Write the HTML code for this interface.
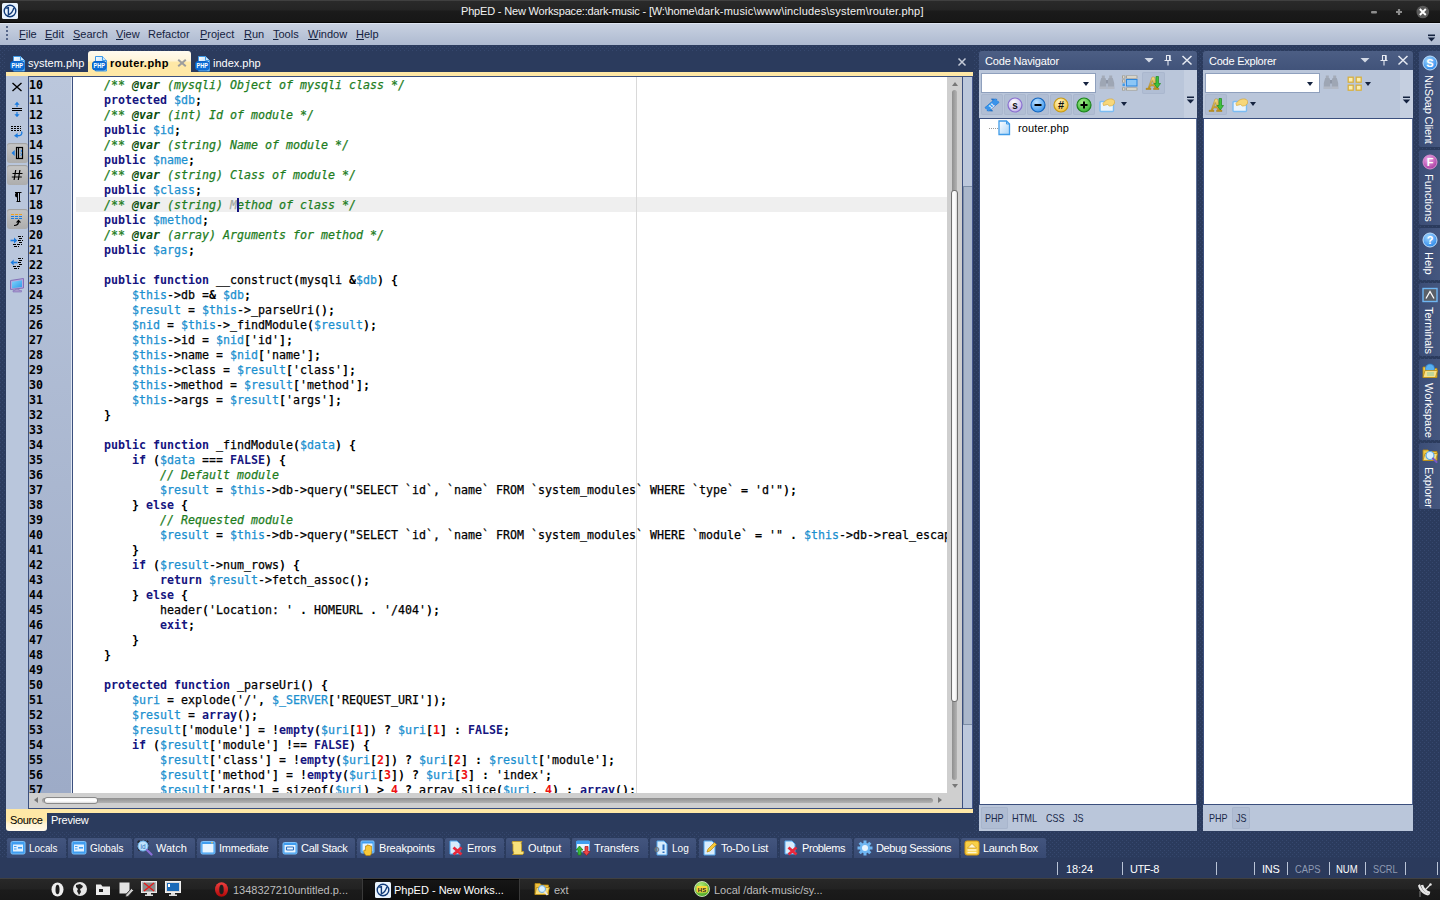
<!DOCTYPE html>
<html lang="en"><head><meta charset="utf-8"><title>PhpED - New Workspace::dark-music</title>
<style>
*{box-sizing:border-box}
html,body{margin:0;padding:0;width:1440px;height:900px;overflow:hidden;background:#2b3b5d;font-family:"Liberation Sans",sans-serif;font-size:11px;color:#000}
.abs,.abs>*{position:absolute}
#root{position:absolute;left:0;top:0;width:1440px;height:900px;overflow:hidden}
#root div,#root span.p,#root svg{position:absolute}
#dots{left:0;top:45px;width:1440px;height:833px}
/* title bar */
#title{left:0;top:0;width:1440px;height:23px;background:linear-gradient(#404040 0,#404040 1px,#2a2a2a 1px,#242424 10px,#1b1b1b 11px,#171717 22px,#050505 22px)}
#title .t{left:461px;top:4px;color:#f2f2f2;font-size:11px;line-height:14px;white-space:pre}
/* menu */
#menu{left:0;top:23px;width:1440px;height:22px;background:linear-gradient(#dde4f0 0,#dde4f0 1px,#c8d1e1 1px,#aebad0)}
#menu .m{top:4px;font-size:11px;line-height:14px;color:#14223f;white-space:pre}
#menu u{text-decoration:underline}
/* editor */
#tabrow{left:0;top:51px;width:974px;height:21px}
#tabbg{left:6px;top:51px;width:968px;height:21px;background:#2b3b5d}
.etab{top:0;height:21px;color:#fff;font-size:11px;line-height:14px;white-space:pre}
.etab .tx{top:5px}
#ed-yt{left:6px;top:72px;width:967px;height:4px;background:#ffe8a6}
#ed-yb{left:6px;top:809px;width:967px;height:4px;background:#ffe8a6}
#ed-strip{left:6px;top:76px;width:22px;height:733px;background:#b9c6dc}
#ed-frame{left:28px;top:76px;width:935px;height:733px;background:#3b4f7d}
#gutter{left:29px;top:77px;width:43px;height:716px;background:linear-gradient(#bbc7dc,#9dabc7);overflow:hidden;border-right:1px solid #dfe6f1}
#gutter .nums{left:0;top:1px;font:bold 11.63px/15px "DejaVu Sans Mono","Liberation Mono",monospace;color:#000}
#gutter .nums div{position:static}
#code{left:73px;top:77px;width:874px;height:716px;background:#fff;overflow:hidden}
#code .margin{left:563px;top:0;width:1px;height:716px;background:#d9d9d9}
#code .lines{left:3px;top:1px;width:2000px;font:11.63px/15px "DejaVu Sans Mono","Liberation Mono",monospace;color:#000}
#code .lines div{position:static;height:15px;white-space:pre;-webkit-text-stroke:0.25px}
#code .lines b{-webkit-text-stroke:0}
#code .lines .cur{background:none}
#curbg{left:3px;top:120px;width:871px;height:15px;background:#efefef}
#code .c{color:#1e7d1e;font-style:italic}
#code .cv{color:#0b4d0b}
#code .k{color:#15157f}
#code .v{color:#1b90cf}
#code .n{color:#ee1111}
#vscroll{left:947px;top:77px;width:15px;height:716px;background:#cfcfcf}
#hscroll{left:29px;top:793px;width:918px;height:15px;background:#cfcfcf}
#corner{left:947px;top:793px;width:15px;height:15px;background:#cfcfcf}
#ed-right{left:962px;top:76px;width:11px;height:733px;background:#bcc8dc;border-left:1px solid #3b4f7d;border-right:1px solid #44568a;border-top:1px solid #3b4f7d;border-bottom:1px solid #3b4f7d}

/* window buttons */
#title .logo{left:2px;top:3px;width:16px;height:16px}
#title .wb{left:1366px;top:3px;width:70px;height:18px}
#menu .grip{left:6px;width:2px;height:2px;background:#56678a}
#menu .chev{left:1427px;top:11px;width:9px;height:9px}
/* editor tabs */
.etab.act{background:linear-gradient(#fffbf0 0,#fff5da 45%,#ffe8a6 55%,#ffe8a6);border-radius:3px 3px 0 0;color:#000}
.etab .ic{top:5px;width:16px;height:16px}
.etab .x{top:4px;font:bold 12px/14px "Liberation Sans",sans-serif;color:#9b9b9b}
#edclose{left:957px;top:6px;width:10px;height:10px}
/* strip buttons */
.sb{left:1px;width:21px;height:20px}
.sb.on{background:linear-gradient(#c6c6c6,#adadad);border-radius:3px;box-shadow:inset 0 1px 1px #9e9e9e}
.sb svg{left:2px;top:2px;width:16px;height:16px}
/* scrollbars */
#vscroll .trk{left:5px;top:13px;width:5px;height:690px;border-radius:3px;background:linear-gradient(90deg,#8e8e8e,#b3b3b3)}
#vscroll .thumb{left:4px;top:113px;width:7px;height:512px;border-radius:3px;background:linear-gradient(90deg,#f4f4f4,#fff 40%,#f4f4f4 70%,#d4d4d4);border:1px solid #707070}
#hscroll .trk{left:13px;top:5px;width:891px;height:5px;border-radius:3px;background:linear-gradient(#8e8e8e,#b3b3b3)}
#hscroll .thumb{left:15px;top:4px;width:54px;height:7px;border-radius:3px;background:linear-gradient(#f4f4f4,#fff 40%,#fff 60%,#dcdcdc);border:1px solid #8a8a8a}
.arr{width:0;height:0;border:3px solid transparent}
#ed-right .dk{left:0;top:109px;width:9px;height:539px;background:#aab7cb;border:1px solid #7d8ea6;border-right:0}
#caret{left:164px;top:121px;width:2px;height:14px;background:#15157f}

/* side panels */
.pn{top:51px;height:780px}
.pn .hd{left:0;top:0;right:0;height:19px;border-radius:3px 3px 0 0;background:linear-gradient(#4c5e84,#41537a);color:#fff;font-size:11px;line-height:14px}
.pn .hd .tt{left:6px;top:3px;white-space:pre}
.pn .hd svg{top:3px;width:12px;height:12px}
.pn .tb{left:0;top:19px;right:0;height:48px;background:#c5cfe0}
.pn .tb .in{left:0;top:0;right:13px;bottom:0;background:#bac6da}
.pn .combo{left:2px;top:3px;width:115px;height:20px;background:#fff;border:1px solid #8fa0bd}
.pn .combo i{position:absolute;right:6px;top:8px;width:0;height:0;border:3.5px solid transparent;border-top:4px solid #14223f;border-bottom:0}
.pn .btn{width:22px;height:21px;background:#b1bed4;border-radius:2px;box-shadow:inset 0 0 0 1px #aab7ce}
.pn .btn svg,.pn svg.ti{width:16px;height:16px}
.pn .btn svg{left:3px;top:3px}
.pn .dd{width:0;height:0;border:3px solid transparent;border-top:4px solid #14223f;border-bottom:0}
.pn .tree{left:0;top:67px;right:0;height:687px;background:#fff;border:1px solid #3b4f7d;border-right-color:#5a6d95}
.pn .ft{left:0;top:754px;right:0;height:26px;background:#bac6da}
.pn .ft .b{top:2px;height:22px;font-size:11px;line-height:14px;color:#1b2a4a;padding:4px 0 0 0;text-align:center;white-space:pre}
.pn .ft .tx{top:6px;font-size:11px;line-height:14px;color:#1b2a4a;white-space:pre}
.pn .ft .b.on{background:#b0bdd3;border-radius:2px;box-shadow:inset 0 0 0 1px #a8b5cc}

/* source/preview */
#srcrow{left:6px;top:813px;width:968px;height:19px;background:#2b3b5d}
#srcrow .s{left:0;top:0;width:41px;height:18px;background:linear-gradient(#ffe8a6 0,#ffe8a6 40%,#fff3d2 60%,#fff9ea);border-radius:0 0 3px 3px;color:#000}
#srcrow .tx{top:0px;font-size:11px;line-height:14px;white-space:pre}
/* bottom tabs */
.bt{top:838px;height:20px;background:linear-gradient(#43557e,#374972);border-radius:2px 2px 0 0;color:#fff;font-size:11px;line-height:14px}
.bt svg{left:3px;top:2px;width:16px;height:16px}
.bt .tx{left:22px;top:3px;white-space:pre}
#status{left:0;top:858px;width:1440px;height:20px;background:#2b3a5c}
#status .sep{top:4px;width:1px;height:13px;background:#b9c3d6}
#status .tx{top:4px;font-size:11px;line-height:14px;color:#fff;white-space:pre}
#status .dim{color:#8f9bb3}
/* sidebar */
.st{left:1419px;width:21px;background:linear-gradient(90deg,#3b4d76,#45577f);border-radius:2px 0 0 2px;color:#fff}
.st svg{left:3px;top:4px;width:16px;height:16px}
.st .tx{left:17px;top:24px;font-size:11px;line-height:14px;white-space:pre;transform-origin:0 0;transform:rotate(90deg)}
/* taskbar */
#task{left:0;top:878px;width:1440px;height:22px;background:linear-gradient(#404040 0,#404040 1px,#282828 1px,#222 11px,#1b1b1b 12px,#181818);color:#bdbdbd;font-size:11px;line-height:14px}
#task .tx{top:5px;white-space:pre}
#task svg{top:3px;width:16px;height:16px}
#task .act{left:362px;top:1px;width:158px;height:21px;background:linear-gradient(#161616,#0c0c0c);box-shadow:inset 1px 0 0 #3a3a3a,inset -1px 0 0 #3a3a3a,inset 0 1px 0 #050505}
</style></head><body><div id="root">
<svg id="dots" width="1440" height="833"><defs><pattern id="dp" width="4" height="4" patternUnits="userSpaceOnUse"><rect x="0" y="1" width="1" height="1" fill="#36486e"/><rect x="2" y="3" width="1" height="1" fill="#36486e"/></pattern></defs><rect width="1440" height="833" fill="url(#dp)"/></svg>

<div id="title"><svg class="logo" viewBox="0 0 16 16"><rect x="0" y="0" width="16" height="16" rx="1.5" fill="#e9f3fd"/><circle cx="8" cy="8" r="5.8" fill="none" stroke="#103a78" stroke-width="1.4"/><path d="M4.2 5.3l2.2-.6v7.2c2.6-1.2 4.6-3.6 5.4-7" fill="none" stroke="#103a78" stroke-width="1.4"/></svg><div class="t"><span style="letter-spacing:-0.174px">PhpED - New Workspace::dark-music - [W:\home</span><span style="letter-spacing:0.2px">\dark-music\www\includes\system\router.php]</span></div><svg class="wb" viewBox="0 0 70 18"><rect x="5" y="8" width="6" height="2.4" rx="1" fill="#8c8c8c"/><path d="M33 6v6M30 9h6" stroke="#8c8c8c" stroke-width="2.2"/><circle cx="56.8" cy="9" r="6.3" fill="#5a5a5a"/><path d="M53.8 6l6 6M59.8 6l-6 6" stroke="#fff" stroke-width="1.9"/></svg></div>
<div id="menu"><div class="grip" style="top:3px"></div><div class="grip" style="top:7px"></div><div class="grip" style="top:11px"></div><div class="grip" style="top:15px"></div><svg class="chev" viewBox="0 0 9 9"><rect x="1" y="0.5" width="7" height="1.6" fill="#14223f"/><path d="M0.8 3.5h7.4L4.5 7.6z" fill="#14223f"/></svg>
<div class="m" style="left:19px"><u>F</u>ile</div>
<div class="m" style="left:45px"><u>E</u>dit</div>
<div class="m" style="left:73px"><u>S</u>earch</div>
<div class="m" style="left:116px"><u>V</u>iew</div>
<div class="m" style="left:148px">Refactor</div>
<div class="m" style="left:200px"><u>P</u>roject</div>
<div class="m" style="left:244px"><u>R</u>un</div>
<div class="m" style="left:273px"><u>T</u>ools</div>
<div class="m" style="left:308px"><u>W</u>indow</div>
<div class="m" style="left:356px"><u>H</u>elp</div>
</div>

<div id="tabbg"></div>
<div id="tabrow">
<div class="etab" style="left:6px;width:82px"><svg class="ic" style="left:4px" viewBox="0 0 16 16"><defs><linearGradient id="pg1" x1="0" y1="0" x2="1" y2="1"><stop offset="0" stop-color="#ffffff"/><stop offset="1" stop-color="#8cc8f6"/></linearGradient></defs><path d="M3.500 0.500h7l4 4v10.500h-11z" fill="url(#pg1)" stroke="#3f9be8"/><path d="M10.500 0.500v4h4" fill="#cfe8fb" stroke="#3f9be8"/><rect x="0.500" y="5.500" width="13.500" height="8.500" rx="2.500" fill="#0b6fd8" stroke="#0a62c6"/><text x="7.250" y="12.300" font-family="Liberation Sans, sans-serif" font-weight="bold" font-size="6.800" fill="#fff" text-anchor="middle" textLength="11.500" lengthAdjust="spacingAndGlyphs">PHP</text></svg><div class="tx" style="left:22px">system.php</div></div>
<div class="etab act" style="left:88px;width:103px"><svg class="ic" style="left:4px" viewBox="0 0 16 16"><defs><linearGradient id="pg2" x1="0" y1="0" x2="1" y2="1"><stop offset="0" stop-color="#ffffff"/><stop offset="1" stop-color="#8cc8f6"/></linearGradient></defs><path d="M3.500 0.500h7l4 4v10.500h-11z" fill="url(#pg2)" stroke="#3f9be8"/><path d="M10.500 0.500v4h4" fill="#cfe8fb" stroke="#3f9be8"/><rect x="0.500" y="5.500" width="13.500" height="8.500" rx="2.500" fill="#0b6fd8" stroke="#0a62c6"/><text x="7.250" y="12.300" font-family="Liberation Sans, sans-serif" font-weight="bold" font-size="6.800" fill="#fff" text-anchor="middle" textLength="11.500" lengthAdjust="spacingAndGlyphs">PHP</text></svg><div class="tx" style="left:22px;font-weight:bold;letter-spacing:0.45px">router.php</div><svg style="left:89px;top:8px;width:10px;height:8px" viewBox="0 0 10 8"><path d="M1.200 0.800l7.600 6.400M8.800 0.800l-7.600 6.400" stroke="#9d9d9d" stroke-width="2" fill="none"/></svg></div>
<div class="etab" style="left:191px;width:80px"><svg class="ic" style="left:4px" viewBox="0 0 16 16"><defs><linearGradient id="pg3" x1="0" y1="0" x2="1" y2="1"><stop offset="0" stop-color="#ffffff"/><stop offset="1" stop-color="#8cc8f6"/></linearGradient></defs><path d="M3.500 0.500h7l4 4v10.500h-11z" fill="url(#pg3)" stroke="#3f9be8"/><path d="M10.500 0.500v4h4" fill="#cfe8fb" stroke="#3f9be8"/><rect x="0.500" y="5.500" width="13.500" height="8.500" rx="2.500" fill="#0b6fd8" stroke="#0a62c6"/><text x="7.250" y="12.300" font-family="Liberation Sans, sans-serif" font-weight="bold" font-size="6.800" fill="#fff" text-anchor="middle" textLength="11.500" lengthAdjust="spacingAndGlyphs">PHP</text></svg><div class="tx" style="left:22px">index.php</div></div>
<svg id="edclose" viewBox="0 0 10 10"><path d="M1.5 1.5l7 7M8.5 1.5l-7 7" stroke="#c5cbd8" stroke-width="1.5" fill="none"/></svg>
</div>
<div id="ed-yt"></div><div id="ed-yb"></div>
<div id="ed-strip">
<div class="sb " style="top:1px"><svg viewBox="0 0 16 16"><path d="M3.500 4l9 8M12.500 4l-9 8" stroke="#000" stroke-width="1.400" fill="none"/></svg></div>
<div class="sb " style="top:23px"><svg viewBox="0 0 16 16"><path d="M3 7.500h10M3 9.500h10" stroke="#000" stroke-width="1"/><path d="M8 3v3M8 11v3" stroke="#1a7be0" stroke-width="1.200"/><path d="M8 .800l-2.600 3h5.200zM8 16.200l-2.600-3h5.200z" fill="#1a7be0"/></svg></div>
<div class="sb " style="top:45px"><svg viewBox="0 0 16 16"><path d="M2 3.5h10M2 5.5h10M2 7.5h10" stroke="#000" stroke-width="1" stroke-dasharray="2 1"/><path d="M12.5 8.5c1.5 2.5-.5 4.5-5 4.3" stroke="#1a7be0" stroke-width="1.4" fill="none"/><path d="M5 12.7l3.6-2.6v5z" fill="#1a7be0"/></svg></div>
<div class="sb on" style="top:67px"><svg viewBox="0 0 16 16"><path d="M2.5 8l3.2-3v6z" fill="#1a7be0"/><rect x="7.5" y="2.5" width="6" height="11" fill="none" stroke="#000" stroke-width="1.2"/><path d="M9.5 2.5v11" stroke="#000" stroke-width="1.2"/><path d="M11.5 5l1.5 1-1.5 1M11.5 8.5l1.5 1-1.5 1" stroke="#1a7be0" stroke-width="0.9" fill="none"/></svg></div>
<div class="sb on" style="top:89px"><svg viewBox="0 0 16 16"><path d="M6.7 3l-1.6 10M10.9 3l-1.6 10M3.5 6.5h10M2.8 10h10" stroke="#000" stroke-width="1.2" fill="none"/></svg></div>
<div class="sb " style="top:111px"><svg viewBox="0 0 16 16"><path d="M8.5 3.5v9M10.5 3.5v9M6 3.5h6.5M7.5 12.5h4" stroke="#000" stroke-width="1" fill="none"/><path d="M8.5 3.5a2.5 2.5 0 0 0 0 5z" fill="#000"/></svg></div>
<div class="sb on" style="top:133px"><svg viewBox="0 0 16 16"><path d="M2 3.5h12" stroke="#f0a020" stroke-width="1" stroke-dasharray="3 1"/><path d="M2 5.5h12M2 7.5h12" stroke="#1a7be0" stroke-width="1" stroke-dasharray="3 1"/><path d="M5 14.5c3 0 4.5-1.500 4.500-4" stroke="#000" stroke-width="1.2" fill="none"/><path d="M9.5 8.500l-2.6 3h5.2z" fill="#000"/></svg></div>
<div class="sb " style="top:155px"><svg viewBox="0 0 16 16"><path d="M9 3.500h5M10 5.500h3M9 7.500h5M10 9.500h3M4 11.500h9M5 13.500h5" stroke="#000" stroke-width="1" stroke-dasharray="3 1"/><path d="M1.500 7.500h4" stroke="#1a7be0" stroke-width="1.600"/><path d="M8.200 7.500l-3.200-3v6z" fill="#1a7be0"/></svg></div>
<div class="sb " style="top:177px"><svg viewBox="0 0 16 16"><path d="M9 3.500h5M10 5.500h4M9 7.500h3M10 9.500h4M4 11.500h8M5 13.500h5" stroke="#000" stroke-width="1" stroke-dasharray="3 1"/><path d="M4.500 7.500h4" stroke="#1a7be0" stroke-width="1.600"/><path d="M1.500 7.500l3.200-3v6z" fill="#1a7be0"/></svg></div>
<div class="sb " style="top:199px"><svg viewBox="0 0 16 16"><defs><linearGradient id="mon" x1="0" y1="0" x2="1" y2="1"><stop offset="0" stop-color="#7fd4fb"/><stop offset="1" stop-color="#2f9be8"/></linearGradient></defs><path d="M1.500 3.500l13-2v9.500l-13 1.500z" fill="#b8a8dc" stroke="#8270b8"/><path d="M3 4.700l10-1.500v6.800l-10 1.200z" fill="url(#mon)"/><path d="M6 12.500l4-.5v1.500h2.500v1.500h-8.500v-1.500h2z" fill="#a898cc" stroke="#8270b8" stroke-width=".6"/></svg></div>
</div>
<div id="ed-frame"></div>
<div id="gutter"><div class="nums">
<div>10</div>
<div>11</div>
<div>12</div>
<div>13</div>
<div>14</div>
<div>15</div>
<div>16</div>
<div>17</div>
<div>18</div>
<div>19</div>
<div>20</div>
<div>21</div>
<div>22</div>
<div>23</div>
<div>24</div>
<div>25</div>
<div>26</div>
<div>27</div>
<div>28</div>
<div>29</div>
<div>30</div>
<div>31</div>
<div>32</div>
<div>33</div>
<div>34</div>
<div>35</div>
<div>36</div>
<div>37</div>
<div>38</div>
<div>39</div>
<div>40</div>
<div>41</div>
<div>42</div>
<div>43</div>
<div>44</div>
<div>45</div>
<div>46</div>
<div>47</div>
<div>48</div>
<div>49</div>
<div>50</div>
<div>51</div>
<div>52</div>
<div>53</div>
<div>54</div>
<div>55</div>
<div>56</div>
<div>57</div>
</div></div>
<div id="code"><div id="curbg"></div><div class="margin"></div><div class="lines">
<div class="ln">    <i class="c">/** <b class="cv">@var</b> (mysqli) Object of mysqli class */</i></div>
<div class="ln">    <b class="k">protected</b> <span class="v">$db</span><b>;</b></div>
<div class="ln">    <i class="c">/** <b class="cv">@var</b> (int) Id of module */</i></div>
<div class="ln">    <b class="k">public</b> <span class="v">$id</span><b>;</b></div>
<div class="ln">    <i class="c">/** <b class="cv">@var</b> (string) Name of module */</i></div>
<div class="ln">    <b class="k">public</b> <span class="v">$name</span><b>;</b></div>
<div class="ln">    <i class="c">/** <b class="cv">@var</b> (string) Class of module */</i></div>
<div class="ln">    <b class="k">public</b> <span class="v">$class</span><b>;</b></div>
<div class="ln cur">    <i class="c">/** <b class="cv">@var</b> (string) <span style="color:#9fa8a0">M</span>ethod of class */</i></div>
<div class="ln">    <b class="k">public</b> <span class="v">$method</span><b>;</b></div>
<div class="ln">    <i class="c">/** <b class="cv">@var</b> (array) Arguments for method */</i></div>
<div class="ln">    <b class="k">public</b> <span class="v">$args</span><b>;</b></div>
<div class="ln">&nbsp;</div>
<div class="ln">    <b class="k">public</b> <b class="k">function</b> __construct<b>(</b>mysqli <b>&amp;</b><span class="v">$db</span><b>)</b> <b>{</b></div>
<div class="ln">        <span class="v">$this</span>-&gt;db <b>=&amp;</b> <span class="v">$db</span><b>;</b></div>
<div class="ln">        <span class="v">$result</span> <b>=</b> <span class="v">$this</span>-&gt;_parseUri<b>();</b></div>
<div class="ln">        <span class="v">$nid</span> <b>=</b> <span class="v">$this</span>-&gt;_findModule<b>(</b><span class="v">$result</span><b>);</b></div>
<div class="ln">        <span class="v">$this</span>-&gt;id <b>=</b> <span class="v">$nid</span><b>[</b>'id'<b>];</b></div>
<div class="ln">        <span class="v">$this</span>-&gt;name <b>=</b> <span class="v">$nid</span><b>[</b>'name'<b>];</b></div>
<div class="ln">        <span class="v">$this</span>-&gt;class <b>=</b> <span class="v">$result</span><b>[</b>'class'<b>];</b></div>
<div class="ln">        <span class="v">$this</span>-&gt;method <b>=</b> <span class="v">$result</span><b>[</b>'method'<b>];</b></div>
<div class="ln">        <span class="v">$this</span>-&gt;args <b>=</b> <span class="v">$result</span><b>[</b>'args'<b>];</b></div>
<div class="ln">    <b>}</b></div>
<div class="ln">&nbsp;</div>
<div class="ln">    <b class="k">public</b> <b class="k">function</b> _findModule<b>(</b><span class="v">$data</span><b>)</b> <b>{</b></div>
<div class="ln">        <b class="k">if</b> <b>(</b><span class="v">$data</span> <b>===</b> <b class="k">FALSE</b><b>)</b> <b>{</b></div>
<div class="ln">            <i class="c">// Default module</i></div>
<div class="ln">            <span class="v">$result</span> <b>=</b> <span class="v">$this</span>-&gt;db-&gt;query<b>(</b>"SELECT `id`, `name` FROM `system_modules` WHERE `type` = 'd'"<b>);</b></div>
<div class="ln">        <b>}</b> <b class="k">else</b> <b>{</b></div>
<div class="ln">            <i class="c">// Requested module</i></div>
<div class="ln">            <span class="v">$result</span> <b>=</b> <span class="v">$this</span>-&gt;db-&gt;query<b>(</b>"SELECT `id`, `name` FROM `system_modules` WHERE `module` = '" <b>.</b> <span class="v">$this</span>-&gt;db-&gt;real_escape_string<b>(</b><span class="v">$data</span><b>)</b> <b>.</b> "'"<b>);</b></div>
<div class="ln">        <b>}</b></div>
<div class="ln">        <b class="k">if</b> <b>(</b><span class="v">$result</span>-&gt;num_rows<b>)</b> <b>{</b></div>
<div class="ln">            <b class="k">return</b> <span class="v">$result</span>-&gt;fetch_assoc<b>();</b></div>
<div class="ln">        <b>}</b> <b class="k">else</b> <b>{</b></div>
<div class="ln">            header<b>(</b>'Location: ' <b>.</b> HOMEURL <b>.</b> '/404'<b>);</b></div>
<div class="ln">            <b class="k">exit</b><b>;</b></div>
<div class="ln">        <b>}</b></div>
<div class="ln">    <b>}</b></div>
<div class="ln">&nbsp;</div>
<div class="ln">    <b class="k">protected</b> <b class="k">function</b> _parseUri<b>()</b> <b>{</b></div>
<div class="ln">        <span class="v">$uri</span> <b>=</b> explode<b>(</b>'/'<b>,</b> <span class="v">$_SERVER</span><b>[</b>'REQUEST_URI'<b>]);</b></div>
<div class="ln">        <span class="v">$result</span> <b>=</b> <b class="k">array</b><b>();</b></div>
<div class="ln">        <span class="v">$result</span><b>[</b>'module'<b>]</b> <b>=</b> <b>!</b><b class="k">empty</b><b>(</b><span class="v">$uri</span><b>[</b><b class="n">1</b><b>])</b> <b>?</b> <span class="v">$uri</span><b>[</b><b class="n">1</b><b>]</b> <b>:</b> <b class="k">FALSE</b><b>;</b></div>
<div class="ln">        <b class="k">if</b> <b>(</b><span class="v">$result</span><b>[</b>'module'<b>]</b> <b>!==</b> <b class="k">FALSE</b><b>)</b> <b>{</b></div>
<div class="ln">            <span class="v">$result</span><b>[</b>'class'<b>]</b> <b>=</b> <b>!</b><b class="k">empty</b><b>(</b><span class="v">$uri</span><b>[</b><b class="n">2</b><b>])</b> <b>?</b> <span class="v">$uri</span><b>[</b><b class="n">2</b><b>]</b> <b>:</b> <span class="v">$result</span><b>[</b>'module'<b>];</b></div>
<div class="ln">            <span class="v">$result</span><b>[</b>'method'<b>]</b> <b>=</b> <b>!</b><b class="k">empty</b><b>(</b><span class="v">$uri</span><b>[</b><b class="n">3</b><b>])</b> <b>?</b> <span class="v">$uri</span><b>[</b><b class="n">3</b><b>]</b> <b>:</b> 'index'<b>;</b></div>
<div class="ln">            <span class="v">$result</span><b>[</b>'args'<b>]</b> <b>=</b> sizeof<b>(</b><span class="v">$uri</span><b>)</b> <b>&gt;</b> <b class="n">4</b> <b>?</b> array_slice<b>(</b><span class="v">$uri</span><b>,</b> <b class="n">4</b><b>)</b> <b>:</b> <b class="k">array</b><b>();</b></div>
</div><div id="caret"></div></div>
<div id="vscroll"><div class="arr" style="left:5px;top:5px;border-bottom:4px solid #777;border-top:0"></div><div class="trk"></div><div class="thumb"></div><div class="arr" style="left:5px;top:707px;border-top:4px solid #777;border-bottom:0"></div></div>
<div id="hscroll"><div class="arr" style="left:5px;top:4px;border-right:4px solid #777;border-left:0"></div><div class="trk"></div><div class="thumb"></div><div class="arr" style="left:909px;top:4px;border-left:4px solid #777;border-right:0"></div></div><div id="corner"></div>
<div id="ed-right"><div class="dk"></div></div>

<div class="pn" id="nav" style="left:979px;width:218px">
<div class="hd"><div class="tt" style="letter-spacing:-0.17px">Code Navigator</div><svg style="right:42px" viewBox="0 0 12 12"><path d="M1.500 4h9l-4.500 4.500z" fill="#d3d9e5"/></svg><svg style="right:23px" viewBox="0 0 12 12"><path d="M4 1.500h4.500M4.500 1.500v5M7.500 1.500v5M8.200 1.500v5M2.500 6.500h7M6 6.500v5" stroke="#e6eaf2" stroke-width="1.100" fill="none"/></svg><svg style="right:4px" viewBox="0 0 12 12"><path d="M1.500 2l9 8.500M10.500 2l-9 8.500" stroke="#e6eaf2" stroke-width="1.500" fill="none"/></svg></div>
<div class="tb"><div class="in"></div><div class="combo"><i></i></div><svg class="ti" style="left:120px;top:4px" viewBox="0 0 16 16"><path d="M2.800 1.500h3v2.500h-3zM10.200 1.500h3v2.500h-3z" fill="#a4abb8"/><path d="M2.200 4h4.300l.9 3v8h-6.600v-6zM9.500 4h4.300l1.400 5v6h-6.600v-8z" fill="#9ea6b4"/><rect x="7" y="6" width="2" height="3.500" fill="#8e96a6"/><path d="M.8 12.500h6.600v2.500h-6.600zM8.600 12.500h6.600v2.500h-6.600z" fill="#b3b9c5"/></svg><svg class="ti" style="left:143px;top:5px" viewBox="0 0 16 16"><g fill="#f3efe6" stroke="#9c978a" stroke-width=".8"><rect x=".5" y=".900" width="2.400" height="2.200"/><rect x="4.500" y=".900" width="10.500" height="2.200"/><rect x=".5" y="4.900" width="2.400" height="2.200"/><rect x=".5" y="12.900" width="2.400" height="2.200"/><rect x="4.500" y="12.900" width="10.500" height="2.200"/></g><rect x=".5" y="8.500" width="2.400" height="2.600" fill="#3f9be8"/><rect x="4.500" y="4.500" width="10.500" height="6.500" fill="#8cc6f6" stroke="#2b86dd"/></svg><div class="btn" style="left:163px;top:2px;width:23px;height:22px"><svg viewBox="0 0 16 16"><defs><linearGradient id="gold1" x1="0" y1="0" x2="0" y2="1"><stop offset="0" stop-color="#f6dc8a"/><stop offset="1" stop-color="#b88a10"/></linearGradient></defs><path d="M1 14.500h5v-1.200h-1.300l.8-2.300h3.500l.7 2.300h-1.200v1.200h5.500v-1.200h-1l-3.500-11.300h-2.500l-4 11.300h-2zM6 9.500l1.300-4 1.200 4z" fill="url(#gold1)" stroke="#a87c0c" stroke-width=".4"/><path d="M11 1.500h2.500v7h2l-3.200 4.500-3.300-4.500h2z" fill="#3cc23c" stroke="#1f8a1f" stroke-width=".7"/></svg></div>
<div class="btn" style="left:2px;top:24px"><svg viewBox="0 0 16 16"><g transform="rotate(-40 8 8)"><path d="M1 5.500h10.500v-2.500l4 4-4 0h-10.500zM15 10.500h-10.500v2.500l-4-4h14.500z" fill="#1d7fe0" stroke="#0f5fb8" stroke-width=".6"/><path d="M1 5.500h14v5h-14z" fill="#3a93ea"/><text x="4" y="10.300" font-family="Liberation Sans, sans-serif" font-weight="bold" font-size="5.500" fill="#fff">11</text></g></svg></div>
<div class="btn" style="left:25px;top:24px"><svg viewBox="0 0 16 16"><defs><radialGradient id="cs" cx=".4" cy=".3" r=".8"><stop offset="0" stop-color="#ffffff"/><stop offset="1" stop-color="#b9a8e6"/></radialGradient></defs><circle cx="8" cy="8" r="7" fill="url(#cs)" stroke="#8a6fcf" stroke-width="1.200"/><text x="8" y="11.800" font-family="Liberation Sans, sans-serif" font-weight="bold" font-size="10" text-anchor="middle" fill="#111">s</text></svg></div>
<div class="btn" style="left:48px;top:24px"><svg viewBox="0 0 16 16"><defs><radialGradient id="cm" cx=".4" cy=".3" r=".8"><stop offset="0" stop-color="#bfe2ff"/><stop offset="1" stop-color="#2f8ee8"/></radialGradient></defs><circle cx="8" cy="8" r="7" fill="url(#cm)" stroke="#1466c0" stroke-width="1.200"/><rect x="4.500" y="7" width="7" height="2" fill="#000"/></svg></div>
<div class="btn" style="left:71px;top:24px"><svg viewBox="0 0 16 16"><defs><radialGradient id="ch" cx=".4" cy=".3" r=".8"><stop offset="0" stop-color="#fff7c8"/><stop offset="1" stop-color="#eeb820"/></radialGradient></defs><circle cx="8" cy="8" r="7" fill="url(#ch)" stroke="#c89a14" stroke-width="1.200"/><text x="8" y="12" font-family="Liberation Sans, sans-serif" font-weight="bold" font-size="11" text-anchor="middle" fill="#111">#</text></svg></div>
<div class="btn" style="left:94px;top:24px"><svg viewBox="0 0 16 16"><defs><radialGradient id="cp" cx=".4" cy=".3" r=".8"><stop offset="0" stop-color="#a4ee8a"/><stop offset="1" stop-color="#2aa82a"/></radialGradient></defs><circle cx="8" cy="8" r="7" fill="url(#cp)" stroke="#1c841c" stroke-width="1.200"/><path d="M8 4.500v7M4.500 8h7" stroke="#000" stroke-width="2"/></svg></div>
<svg class="ti" style="left:120px;top:27px" viewBox="0 0 16 16"><rect x="1" y="4.500" width="13.500" height="10" rx="1" fill="#eaf5fe" stroke="#7cbcf2" stroke-width="1.400"/><path d="M4 6.500c2-3 5-5 9-4.500 2 .5 3 2 2.500 4-.5 2-2.500 3-5 3l-2-1.500-4 1z" fill="#f7d77a" stroke="#d9a93a" stroke-width=".7"/></svg><div class="dd" style="left:142px;top:32px"></div>
<svg style="left:207px;top:26px;width:9px;height:9px" viewBox="0 0 9 9"><rect x="1" y="0.5" width="7" height="1.500" fill="#14223f"/><path d="M0.800 3.500h7.400L4.500 7.500z" fill="#14223f"/></svg>
</div>
<div class="tree"><div style="left:9px;top:9px;width:9px;height:1px;background:repeating-linear-gradient(90deg,#9a9a9a 0 1px,transparent 1px 2px)"></div>
<svg style="left:18px;top:1px;width:13px;height:16px" viewBox="0 0 13 16"><defs><linearGradient id="fi" x1="0" y1="0" x2="1" y2="1"><stop offset="0" stop-color="#fff"/><stop offset="1" stop-color="#a9d4f8"/></linearGradient></defs><path d="M1 1h7.500l3 3v10.500h-10.500z" fill="url(#fi)" stroke="#3f9be8" stroke-width="1.300"/><path d="M8.500 1v3h3" fill="none" stroke="#3f9be8"/></svg>
<div style="left:38px;top:2px;font-size:11px;line-height:14px;white-space:pre;letter-spacing:.15px">router.php</div></div>
<div class="ft"><div class="b on" style="left:2px;width:27px"></div><div class="tx" style="left:6px;transform-origin:0 0;transform:scaleX(0.822)">PHP</div><div class="tx" style="left:33px;transform-origin:0 0;transform:scaleX(0.841)">HTML</div><div class="tx" style="left:67px;transform-origin:0 0;transform:scaleX(0.813)">CSS</div><div class="tx" style="left:94px;transform-origin:0 0;transform:scaleX(0.818)">JS</div></div>
</div>
<div class="pn" id="exp" style="left:1203px;width:210px">
<div class="hd"><div class="tt" style="letter-spacing:-0.24px">Code Explorer</div><svg style="right:42px" viewBox="0 0 12 12"><path d="M1.500 4h9l-4.500 4.500z" fill="#d3d9e5"/></svg><svg style="right:23px" viewBox="0 0 12 12"><path d="M4 1.500h4.500M4.500 1.500v5M7.500 1.500v5M8.200 1.500v5M2.500 6.500h7M6 6.500v5" stroke="#e6eaf2" stroke-width="1.100" fill="none"/></svg><svg style="right:4px" viewBox="0 0 12 12"><path d="M1.500 2l9 8.500M10.500 2l-9 8.500" stroke="#e6eaf2" stroke-width="1.500" fill="none"/></svg></div>
<div class="tb"><div class="in"></div><div class="combo"><i></i></div><svg class="ti" style="left:120px;top:4px" viewBox="0 0 16 16"><path d="M2.800 1.500h3v2.500h-3zM10.200 1.500h3v2.500h-3z" fill="#a4abb8"/><path d="M2.200 4h4.300l.9 3v8h-6.600v-6zM9.500 4h4.300l1.400 5v6h-6.600v-8z" fill="#9ea6b4"/><rect x="7" y="6" width="2" height="3.500" fill="#8e96a6"/><path d="M.8 12.500h6.600v2.500h-6.600zM8.600 12.500h6.600v2.500h-6.600z" fill="#b3b9c5"/></svg><svg class="ti" style="left:144px;top:6px" viewBox="0 0 16 16"><g fill="#fbeeb0" stroke="#d8b040" stroke-width="1.300"><rect x="1.200" y="1.200" width="5" height="5"/><rect x="9.200" y="1.200" width="5" height="5"/><rect x="1.200" y="9.200" width="5" height="5"/><rect x="9.200" y="9.200" width="5" height="5"/></g></svg><div class="dd" style="left:162px;top:12px"></div>
<div class="btn" style="left:2px;top:24px"><svg viewBox="0 0 16 16"><defs><linearGradient id="gold2" x1="0" y1="0" x2="0" y2="1"><stop offset="0" stop-color="#f6dc8a"/><stop offset="1" stop-color="#b88a10"/></linearGradient></defs><path d="M1 14.500h5v-1.200h-1.300l.8-2.300h3.500l.7 2.300h-1.200v1.200h5.500v-1.200h-1l-3.500-11.300h-2.500l-4 11.300h-2zM6 9.500l1.300-4 1.200 4z" fill="url(#gold2)" stroke="#a87c0c" stroke-width=".4"/><path d="M11 1.500h2.500v7h2l-3.200 4.500-3.300-4.500h2z" fill="#3cc23c" stroke="#1f8a1f" stroke-width=".7"/></svg></div>
<svg class="ti" style="left:29px;top:27px" viewBox="0 0 16 16"><rect x="1" y="4.500" width="13.500" height="10" rx="1" fill="#eaf5fe" stroke="#7cbcf2" stroke-width="1.400"/><path d="M4 6.500c2-3 5-5 9-4.500 2 .5 3 2 2.500 4-.5 2-2.500 3-5 3l-2-1.500-4 1z" fill="#f7d77a" stroke="#d9a93a" stroke-width=".7"/></svg><div class="dd" style="left:47px;top:32px"></div>
<svg style="left:199px;top:26px;width:9px;height:9px" viewBox="0 0 9 9"><rect x="1" y="0.5" width="7" height="1.500" fill="#14223f"/><path d="M0.800 3.500h7.400L4.500 7.500z" fill="#14223f"/></svg>
</div>
<div class="tree"></div>
<div class="ft"><div class="b on" style="left:29px;width:18px"></div><div class="tx" style="left:6px;transform-origin:0 0;transform:scaleX(0.822)">PHP</div><div class="tx" style="left:33px;transform-origin:0 0;transform:scaleX(0.818)">JS</div></div>
</div>
<div id="srcrow"><div class="s"></div><div class="tx" style="left:4px;letter-spacing:-0.39px">Source</div><div class="tx" style="left:45px;color:#fff;letter-spacing:-0.23px">Preview</div></div>
<div class="bt" style="left:7px;width:59px"><svg viewBox="0 0 16 16"><rect x="1" y="1.500" width="14" height="12.500" rx="1.500" fill="#3f9df0" stroke="#7cc0f8" stroke-width="1"/><rect x="3" y="4.500" width="10" height="7" fill="#dff0ff"/><path d="M4 6.500h2.500M4 9h2.500" stroke="#3f9df0" stroke-width="1.200"/><path d="M8 7.800h4" stroke="#3f9df0" stroke-width="1.600"/></svg><div class="tx" style="transform-origin:0 0;transform:scaleX(0.896)">Locals</div></div>
<div class="bt" style="left:68px;width:64px"><svg viewBox="0 0 16 16"><rect x="1" y="1.500" width="14" height="12.500" rx="1.500" fill="#3f9df0" stroke="#7cc0f8" stroke-width="1"/><rect x="3" y="4.500" width="10" height="7" fill="#dff0ff"/><path d="M4 6.500h2.500M4 9h2.500" stroke="#3f9df0" stroke-width="1.200"/><path d="M8 7.800h4" stroke="#3f9df0" stroke-width="1.600"/></svg><div class="tx" style="transform-origin:0 0;transform:scaleX(0.898)">Globals</div></div>
<div class="bt" style="left:134px;width:61px"><svg viewBox="0 0 16 16"><rect x="1" y="1" width="10" height="9" fill="#2b3b5d" stroke="#222" stroke-dasharray="2 1"/><circle cx="6" cy="6" r="5" fill="#bfe3fb" stroke="#6fb6ee"/><text x="6" y="8.500" font-size="6.500" font-family="Liberation Sans, sans-serif" text-anchor="middle" fill="#2a6fb8">id</text><path d="M10 10l4.500 4.500" stroke="#8a6fd8" stroke-width="2.200" stroke-linecap="round"/></svg><div class="tx">Watch</div></div>
<div class="bt" style="left:197px;width:80px"><svg viewBox="0 0 16 16"><rect x="1" y="1.500" width="14" height="12.500" rx="1.500" fill="#3f9df0" stroke="#7cc0f8"/><rect x="2.500" y="4" width="11" height="8.500" fill="#e8f5ff"/><rect x="11" y="2.300" width="2" height="1" fill="#f6c050"/></svg><div class="tx" style="letter-spacing:-0.21px">Immediate</div></div>
<div class="bt" style="left:279px;width:76px"><svg viewBox="0 0 16 16"><rect x="1" y="2.500" width="14" height="11.500" rx="1.500" fill="#3f9df0" stroke="#7cc0f8"/><rect x="2.500" y="5" width="11" height="7.500" fill="#e8f5ff"/><path d="M4.500 7h7M4.500 10h7M4.500 7v3M11.500 7v3" stroke="#2b6fc0" stroke-width="1.100" fill="none"/></svg><div class="tx" style="letter-spacing:-0.30px">Call Stack</div></div>
<div class="bt" style="left:357px;width:86px"><svg viewBox="0 0 16 16"><rect x="1" y="1" width="13" height="12" rx="1" fill="#3f9df0" stroke="#7cc0f8"/><rect x="2.500" y="3.500" width="10" height="8" fill="#e8f5ff"/><path d="M6 15.500c-2-2-2.500-4-2-5.500l1.500.5v-4.500h1.500v-1h1.500v.5h1.500v.5h1.500v6c0 2-.5 3-1.500 3.500z" fill="#f8c838" stroke="#b8860b" stroke-width=".7"/></svg><div class="tx" style="letter-spacing:-0.21px">Breakpoints</div></div>
<div class="bt" style="left:445px;width:59px"><svg viewBox="0 0 16 16"><path d="M2 1h7l3 3v10h-10z" fill="#d8ecfc" stroke="#4fa4ec"/><path d="M5.500 7.500l8 7M13.500 7.500l-8 7" stroke="#e8283c" stroke-width="2.800"/></svg><div class="tx" style="letter-spacing:-0.20px">Errors</div></div>
<div class="bt" style="left:506px;width:64px"><svg viewBox="0 0 16 16"><path d="M3.500 1.500h9.500c-1 1-1 2-.5 3v7h2c.5 1.500 0 2.500-1 3h-10c1-.5 1.500-1.500 1-3h-.5v-7c-1-1-1-2-.5-3z" fill="#f8e27c" stroke="#c8a020" stroke-width=".8"/></svg><div class="tx" style="letter-spacing:0.04px">Output</div></div>
<div class="bt" style="left:572px;width:76px"><svg viewBox="0 0 16 16"><rect x="1.500" y="1" width="13" height="11" rx="1" fill="#e8f5ff" stroke="#4fa4ec"/><rect x="1.500" y="1" width="13" height="3" fill="#3f9df0"/><path d="M4.500 6l-3.500 4h2v5h3v-5h2z" fill="#38b838" stroke="#1a7a1a" stroke-width=".7"/><path d="M11.500 15.500l-3.500-4h2v-5h3v5h2z" fill="#f04848" stroke="#a81818" stroke-width=".7"/></svg><div class="tx" style="letter-spacing:-0.12px">Transfers</div></div>
<div class="bt" style="left:650px;width:46px"><svg viewBox="0 0 16 16"><path d="M4 1h7l3 3v11h-10z" fill="#d8ecfc" stroke="#4fa4ec"/><text x="1" y="12" font-size="9" font-weight="bold" font-family="Liberation Sans, sans-serif" fill="#777">o</text><path d="M10.500 4.500v5.500M10.500 11.500v1.500" stroke="#2b6fc0" stroke-width="2"/></svg><div class="tx" style="transform-origin:0 0;transform:scaleX(0.912)">Log</div></div>
<div class="bt" style="left:699px;width:78px"><svg viewBox="0 0 16 16"><path d="M2 1h8l3 3v11h-11z" fill="#d8ecfc" stroke="#4fa4ec"/><path d="M5 12l1-3 6.500-6.500 2 2-6.500 6.500z" fill="#f8c838" stroke="#b8860b" stroke-width=".7"/></svg><div class="tx" style="letter-spacing:-0.25px">To-Do List</div></div>
<div class="bt" style="left:780px;width:72px"><svg viewBox="0 0 16 16"><path d="M2 1h7l3 3v10h-10z" fill="#d8ecfc" stroke="#4fa4ec"/><path d="M5.500 7.500l8 7M13.500 7.500l-8 7" stroke="#e8283c" stroke-width="2.800"/></svg><div class="tx" style="letter-spacing:-0.43px">Problems</div></div>
<div class="bt" style="left:854px;width:105px"><svg viewBox="0 0 16 16"><g transform="translate(8 8)"><g fill="#6fb6f2"><rect x="-1.500" y="-7.500" width="3" height="15"/><rect x="-1.500" y="-7.500" width="3" height="15" transform="rotate(45)"/><rect x="-1.500" y="-7.500" width="3" height="15" transform="rotate(90)"/><rect x="-1.500" y="-7.500" width="3" height="15" transform="rotate(135)"/></g><circle r="5.200" fill="#6fb6f2"/><circle r="3" fill="#e8f5ff"/></g></svg><div class="tx" style="letter-spacing:-0.36px">Debug Sessions</div></div>
<div class="bt" style="left:961px;width:85px"><svg viewBox="0 0 16 16"><rect x="1" y="1" width="14" height="14" rx="2" fill="#f8d048" stroke="#d89a10"/><path d="M8 3.500l4.500 4.500h-9z" fill="#fff6d0" stroke="#c88a10" stroke-width=".6"/><path d="M3.500 10h9M3.500 12.500h9" stroke="#fff6d0" stroke-width="1.500"/></svg><div class="tx" style="letter-spacing:-0.34px">Launch Box</div></div>
<div id="status">
<div class="sep" style="left:1057px"></div><div class="tx" style="left:1066px;letter-spacing:-0.11px">18:24</div>
<div class="sep" style="left:1122px"></div><div class="tx" style="left:1130px;letter-spacing:-0.43px">UTF-8</div>
<div class="sep" style="left:1216px"></div><div class="sep" style="left:1254px"></div><div class="tx" style="left:1262px;letter-spacing:-0.31px">INS</div>
<div class="sep" style="left:1287px"></div><div class="tx dim" style="left:1295px;transform-origin:0 0;transform:scaleX(0.851)">CAPS</div>
<div class="sep" style="left:1329px"></div><div class="tx" style="left:1336px;transform-origin:0 0;transform:scaleX(0.862)">NUM</div>
<div class="sep" style="left:1365px"></div><div class="tx dim" style="left:1373px;transform-origin:0 0;transform:scaleX(0.835)">SCRL</div>
<div class="sep" style="left:1405px"></div><div class="sep" style="left:1437px"></div>
</div>
<div class="st" style="top:51px;height:96px"><svg viewBox="0 0 16 16"><defs><radialGradient id="b1" cx=".4" cy=".3" r=".8"><stop offset="0" stop-color="#9fd4ff"/><stop offset="1" stop-color="#1f80e8"/></radialGradient></defs><circle cx="8" cy="8" r="7" fill="url(#b1)" stroke="#bfe0ff"/><text x="8" y="12" font-size="11" font-weight="bold" font-family="Liberation Sans, sans-serif" text-anchor="middle" fill="#fff">S</text></svg><div class="tx" style="letter-spacing:-0.17px">NuSoap Client</div></div>
<div class="st" style="top:150px;height:75px"><svg viewBox="0 0 16 16"><defs><radialGradient id="b2" cx=".4" cy=".3" r=".8"><stop offset="0" stop-color="#f0a8e8"/><stop offset="1" stop-color="#a0309a"/></radialGradient></defs><circle cx="8" cy="8" r="7" fill="url(#b2)" stroke="#d890d0"/><text x="8" y="12" font-size="11" font-weight="bold" font-family="Liberation Sans, sans-serif" text-anchor="middle" fill="#fff">F</text></svg><div class="tx">Functions</div></div>
<div class="st" style="top:228px;height:52px"><svg viewBox="0 0 16 16"><defs><radialGradient id="b3" cx=".4" cy=".3" r=".8"><stop offset="0" stop-color="#9fd4ff"/><stop offset="1" stop-color="#1f80e8"/></radialGradient></defs><circle cx="8" cy="8" r="7" fill="url(#b3)" stroke="#bfe0ff"/><text x="8" y="12" font-size="11" font-weight="bold" font-family="Liberation Sans, sans-serif" text-anchor="middle" fill="#fff">?</text></svg><div class="tx">Help</div></div>
<div class="st" style="top:283px;height:73px"><svg viewBox="0 0 16 16"><rect x="1" y="1.500" width="14" height="13" fill="#5a6068" stroke="#6fb6f2" stroke-width="1.400"/><path d="M4 11.500l4-7 4 7" stroke="#fff" stroke-width="1.300" fill="none"/></svg><div class="tx">Terminals</div></div>
<div class="st" style="top:359px;height:81px"><svg viewBox="0 0 16 16"><path d="M1 4h5l1.500 1.500h7.500v9h-14z" fill="#f0c848" stroke="#b88a10" stroke-width=".8"/><circle cx="8" cy="5.500" r="4.500" fill="#58b0f0" stroke="#2878c8" stroke-width=".7"/><path d="M1 14.500l2-7h12.500l-2 7z" fill="#f8e088" stroke="#b88a10" stroke-width=".8"/><rect x="5" y="9" width="7" height="4" fill="#a8d0a0" opacity=".7"/></svg><div class="tx">Workspace</div></div>
<div class="st" style="top:443px;height:66px"><svg viewBox="0 0 16 16"><path d="M1 3h5l1.500 1.500h7.500v9h-14z" fill="#f0c848" stroke="#b88a10" stroke-width=".8"/><path d="M1 13.500l2-7h12.500l-2 7z" fill="#f8e088" stroke="#b88a10" stroke-width=".8"/><circle cx="8" cy="8.500" r="4" fill="#d8f0ff" stroke="#58a8e8" stroke-width="1.200"/><path d="M11 11.500l3.500 3.500" stroke="#7858c8" stroke-width="2" stroke-linecap="round"/></svg><div class="tx">Explorer</div></div>
<div id="task">
<svg style="left:50px" viewBox="0 0 16 16"><ellipse cx="7.500" cy="8.500" rx="6" ry="7" fill="#eeeeee"/><ellipse cx="7.500" cy="8.500" rx="2" ry="4.800" fill="#1e1e1e"/></svg>
<svg style="left:72px" viewBox="0 0 16 16"><circle cx="8" cy="8" r="7" fill="#e8e8e8"/><path d="M4 4l4-1 3 2-1 2-2 1 1 3-2 3-2-4 1-2-2-2z" fill="#222"/></svg>
<svg style="left:95px" viewBox="0 0 16 16"><path d="M1 3.500h5l1.500 2h7.500v8.500h-14z" fill="#ececec"/><rect x="4" y="8" width="4" height="3" fill="#222"/></svg>
<svg style="left:118px" viewBox="0 0 16 16"><path d="M1.500 1.500h10v8l-3 3h-7z" fill="#e4e4e4"/><path d="M8 13.500l5.500-6 2 2-5.500 6-2.500.5z" fill="#cfcfcf" stroke="#222" stroke-width=".8"/></svg>
<svg style="left:141px" viewBox="0 0 16 16"><rect x=".5" y=".5" width="15" height="11" fill="#b8b8b8" stroke="#e8e8e8"/><rect x="2" y="2" width="12" height="8" fill="#8a8a8a"/><path d="M3 2l10 8M13 2l-10 8" stroke="#e81818" stroke-width="1.300"/><path d="M6 12h4v1.500h2v1.500h-8v-1.500h2z" fill="#ddd"/></svg>
<svg style="left:165px" viewBox="0 0 16 16"><rect x=".5" y=".5" width="15" height="11" fill="#d8d8d8" stroke="#f0f0f0"/><rect x="2" y="2" width="12" height="8" fill="#1a6ab8"/><rect x="3" y="3" width="2" height="3" fill="#fff"/><path d="M6 12h4v1.500h2v1.500h-8v-1.500h2z" fill="#ddd"/></svg>
<svg style="left:214px" viewBox="0 0 16 16"><defs><linearGradient id="opr" x1="0" y1="0" x2="0" y2="1"><stop offset="0" stop-color="#f04040"/><stop offset="1" stop-color="#b00808"/></linearGradient></defs><ellipse cx="7.500" cy="8.500" rx="6.500" ry="7.300" fill="url(#opr)"/><ellipse cx="7.500" cy="8.500" rx="2.200" ry="4.800" fill="#1e1e1e"/></svg>
<div class="tx" style="left:233px">1348327210untitled.p...</div>
<div class="act"></div>
<svg style="left:375px;top:4px" viewBox="0 0 16 16"><rect x="0" y="0" width="16" height="16" rx="1.500" fill="#e9f3fd"/><circle cx="8" cy="8" r="5.800" fill="none" stroke="#103a78" stroke-width="1.400"/><path d="M4.200 5.300l2.200-.6v7.200c2.600-1.200 4.600-3.600 5.400-7" fill="none" stroke="#103a78" stroke-width="1.400"/></svg>
<div class="tx" style="left:394px;color:#fff">PhpED - New Works...</div>
<svg style="left:534px" viewBox="0 0 16 16"><path d="M1 2.500h5l1.500 1.500h7v9.500h-13.500z" fill="#f0c040" stroke="#b88a10" stroke-width=".8"/><path d="M1 13.500l1.500-7h13l-2 7z" fill="#f8dc78" stroke="#b88a10" stroke-width=".8"/><circle cx="8" cy="8" r="3.500" fill="#d8f0ff" stroke="#68a8e0"/><path d="M10.500 10.500l3 3.500" stroke="#e8e8e8" stroke-width="1.800"/></svg>
<div class="tx" style="left:554px">ext</div>
<svg style="left:694px" viewBox="0 0 16 16"><defs><radialGradient id="hs" cx=".4" cy=".3" r=".8"><stop offset="0" stop-color="#b8f078"/><stop offset="1" stop-color="#3a9a18"/></radialGradient></defs><circle cx="8" cy="8" r="7.500" fill="url(#hs)" stroke="#e8f8d8" stroke-width=".8"/><rect x="2.500" y="5" width="11" height="6.500" rx="1" fill="#f8d838"/><text x="8" y="10.500" font-size="6" font-weight="bold" font-family="Liberation Sans, sans-serif" text-anchor="middle" fill="#222">HS</text></svg>
<div class="tx" style="left:714px">Local /dark-music/sy...</div>
<svg style="left:1418px;top:4px" viewBox="0 0 16 16"><path d="M2 2c1 5 5 9 10 10l-2 1.500c-5-1-9-5-10-10z" fill="#e8e8e8"/><path d="M4 3c1 4 4 7 8 8" stroke="#e8e8e8" stroke-width="2.500" fill="none"/><path d="M7 8l5-5" stroke="#e8e8e8" stroke-width="1.200"/><circle cx="12.500" cy="2.500" r="1.200" fill="#e8e8e8"/><path d="M2 9.500v5" stroke="#e8e8e8" stroke-width="1" stroke-dasharray="1 1"/></svg>
</div>

</div></body></html>
